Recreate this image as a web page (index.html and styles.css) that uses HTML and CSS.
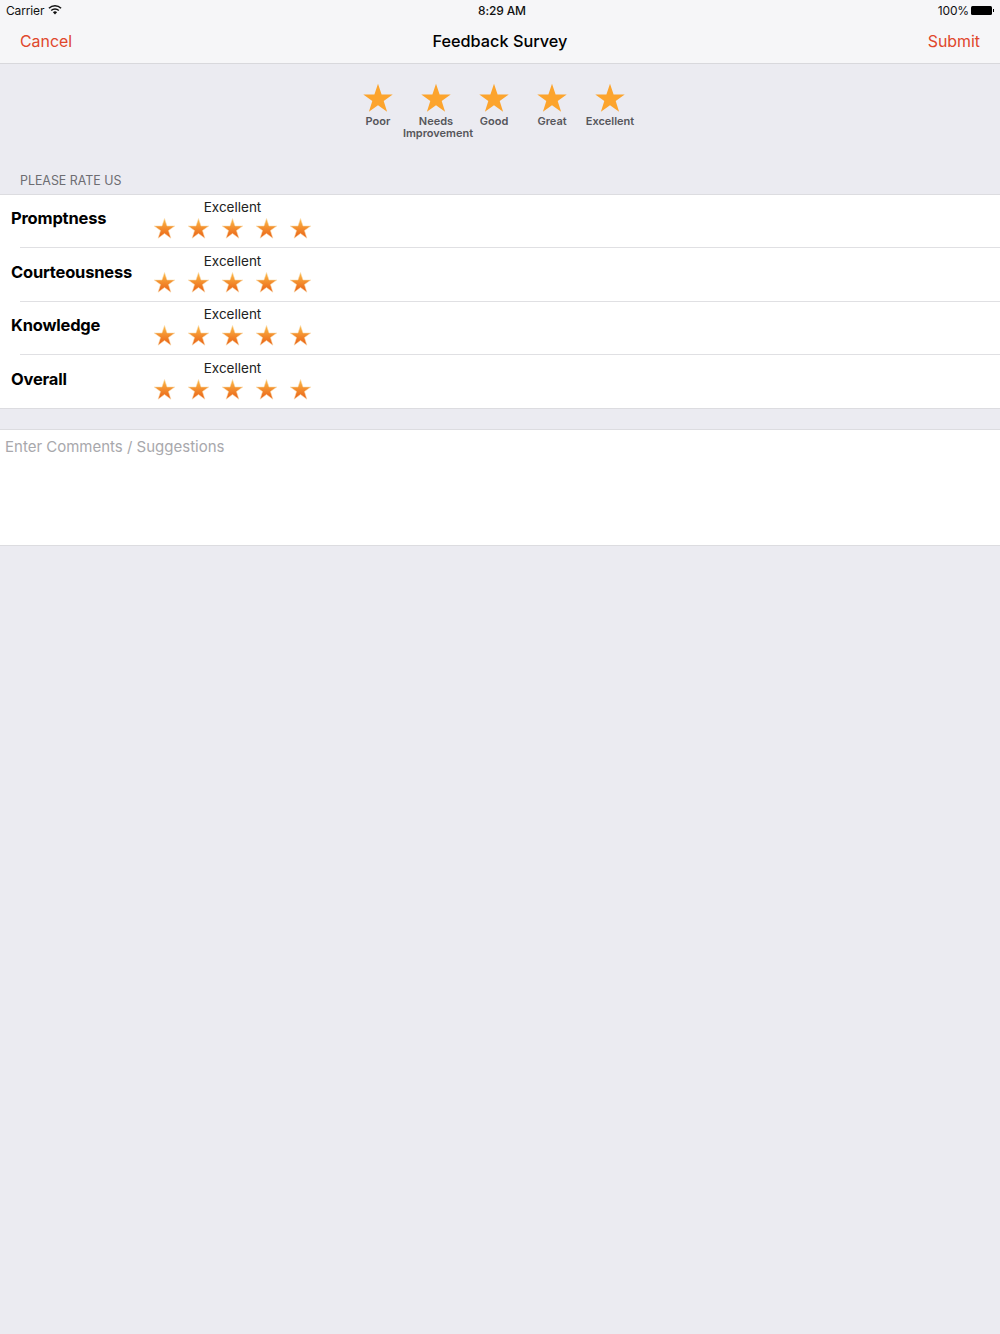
FILE: index.html
```html
<!DOCTYPE html>
<html lang="en">
<head>
	<meta charset="UTF-8">
	<title>Feedback Survey</title>
	<link rel="stylesheet" href="styles.css">
</head>
<body>
	<svg class="defs" width="0" height="0">
		<defs>
			<linearGradient id="rowstar" x1="0" y1="0" x2="0" y2="1">
				<stop offset="0" stop-color="#fdbb48"/>
				<stop offset="1" stop-color="#e95f14"/>
			</linearGradient>
			<symbol id="star" viewBox="0 0 30 30">
				<path d="M15 .8l3.6 10.6h11.1l-9 6.6 3.4 10.8-9.1-6.6-9.1 6.6 3.4-10.8-9-6.6h11.1z"/>
			</symbol>
		</defs>
	</svg>

	<header class="top">
		<div class="status">
			<div class="status-left">
				<span>Carrier</span>
				<svg class="wifi" viewBox="0 0 14 10" width="14" height="10">
					<path d="M7 9.6L4.9 7.3a3 3 0 0 1 4.2 0z"/>
					<path d="M3.7 6.1l-1-1.1a6.2 6.2 0 0 1 8.6 0l-1 1.1a4.7 4.7 0 0 0-6.6 0z"/>
					<path d="M1.5 3.8L.4 2.7a9.5 9.5 0 0 1 13.2 0l-1.1 1.1a8 8 0 0 0-11 0z"/>
				</svg>
			</div>
			<div class="status-time">8:29 AM</div>
			<div class="status-right">
				<span>100%</span>
				<span class="battery"></span>
			</div>
		</div>
		<nav class="nav">
			<a href="#" class="nav-btn">Cancel</a>
			<h1 class="nav-title">Feedback Survey</h1>
			<a href="#" class="nav-btn">Submit</a>
		</nav>
	</header>

	<section class="legend">
		<div class="legend-item">
			<svg class="legend-star"><use href="#star"/></svg>
			<span>Poor</span>
		</div>
		<div class="legend-item">
			<svg class="legend-star"><use href="#star"/></svg>
			<span>Needs</span>
			<span class="shift">Improvement</span>
		</div>
		<div class="legend-item">
			<svg class="legend-star"><use href="#star"/></svg>
			<span>Good</span>
		</div>
		<div class="legend-item">
			<svg class="legend-star"><use href="#star"/></svg>
			<span>Great</span>
		</div>
		<div class="legend-item">
			<svg class="legend-star"><use href="#star"/></svg>
			<span>Excellent</span>
		</div>
	</section>

	<div class="section-title">PLEASE RATE US</div>

	<section class="rates">
		<div class="rate">
			<div class="rate-name">Promptness</div>
			<div class="rate-box">
				<div class="rate-value">Excellent</div>
				<div class="stars">
					<svg class="row-star"><use href="#star"/></svg>
					<svg class="row-star"><use href="#star"/></svg>
					<svg class="row-star"><use href="#star"/></svg>
					<svg class="row-star"><use href="#star"/></svg>
					<svg class="row-star"><use href="#star"/></svg>
				</div>
			</div>
		</div>
		<div class="rate">
			<div class="rate-name">Courteousness</div>
			<div class="rate-box">
				<div class="rate-value">Excellent</div>
				<div class="stars">
					<svg class="row-star"><use href="#star"/></svg>
					<svg class="row-star"><use href="#star"/></svg>
					<svg class="row-star"><use href="#star"/></svg>
					<svg class="row-star"><use href="#star"/></svg>
					<svg class="row-star"><use href="#star"/></svg>
				</div>
			</div>
		</div>
		<div class="rate">
			<div class="rate-name">Knowledge</div>
			<div class="rate-box">
				<div class="rate-value">Excellent</div>
				<div class="stars">
					<svg class="row-star"><use href="#star"/></svg>
					<svg class="row-star"><use href="#star"/></svg>
					<svg class="row-star"><use href="#star"/></svg>
					<svg class="row-star"><use href="#star"/></svg>
					<svg class="row-star"><use href="#star"/></svg>
				</div>
			</div>
		</div>
		<div class="rate">
			<div class="rate-name">Overall</div>
			<div class="rate-box">
				<div class="rate-value">Excellent</div>
				<div class="stars">
					<svg class="row-star"><use href="#star"/></svg>
					<svg class="row-star"><use href="#star"/></svg>
					<svg class="row-star"><use href="#star"/></svg>
					<svg class="row-star"><use href="#star"/></svg>
					<svg class="row-star"><use href="#star"/></svg>
				</div>
			</div>
		</div>
	</section>

	<section class="comments">Enter Comments / Suggestions</section>
</body>
</html>
```

FILE: styles.css
```css
* {
	padding: 0;
	margin: 0;
	box-sizing: border-box;
}
html, body {
	height: 100%;
}
body {
	background: #ebebf1;
	font-family: Inter, "Liberation Sans", sans-serif;
	color: #000;
}
a {
	text-decoration: none;
}
.defs {
	position: absolute;
}
.top {
	height: 64px;
	background: #f6f6f8;
	border-bottom: 1px solid #d8d8dc;
}
.status {
	display: grid;
	grid-template-columns: 1fr auto 1fr;
	align-items: center;
	height: 20px;
	padding: 0 6px;
	font-size: 12px;
	letter-spacing: -0.15px;
	color: #111;
}
.status-left {
	display: flex;
	align-items: center;
	gap: 4px;
}
.status-time {
	padding-left: 4px;
	font-weight: 500;
}
.status-right {
	display: flex;
	align-items: center;
	justify-content: flex-end;
	gap: 2px;
	padding-right: 2px;
}
.wifi {
	fill: #111;
}
.battery {
	position: relative;
	width: 21px;
	height: 9px;
	background: #000;
	border-radius: 1.5px;
}
.battery::after {
	content: "";
	position: absolute;
	left: 21.5px;
	top: 3px;
	width: 1.5px;
	height: 3px;
	background: #000;
}
.nav {
	display: flex;
	align-items: center;
	justify-content: space-between;
	height: 42px;
	padding: 0 20px;
}
.nav-btn {
	font-size: 15.9px;
	color: #e0472c;
}
.nav-title {
	font-size: 16.3px;
	font-weight: 500;
}
.legend {
	display: flex;
	justify-content: center;
	height: 98px;
	padding: 19px 12px 0 0;
}
.legend-item {
	width: 58px;
	display: flex;
	flex-direction: column;
	align-items: center;
	text-align: center;
	font-size: 11px;
	line-height: 11.5px;
	font-weight: 600;
	color: #56565b;
	white-space: nowrap;
}
.legend-item .shift {
	margin-left: 4px;
}
.legend-star {
	width: 30px;
	height: 30px;
	margin-bottom: 3px;
	fill: #fca42d;
}
.section-title {
	height: 32px;
	padding: 11px 0 0 20px;
	font-size: 12.4px;
	line-height: 16px;
	color: #6d6d72;
}
.rates {
	background: #fff;
	border-top: 1px solid #dcdce0;
	border-bottom: 1px solid #dcdce0;
	height: 215px;
}
.rate {
	display: flex;
	height: 53.6px;
	padding-left: 11px;
	position: relative;
}
.rate + .rate::before {
	content: "";
	position: absolute;
	left: 20px;
	right: 0;
	top: -1.6px;
	height: 1px;
	background: #e0e0e3;
}
.rate-name {
	width: 143px;
	padding-top: 13px;
	font-size: 16.5px;
	line-height: 20px;
	font-weight: 700;
	letter-spacing: -0.2px;
}
.rate-box {
	width: 160px;
	padding-top: 4px;
}
.rate-value {
	width: 157px;
	text-align: center;
	font-size: 13.5px;
	line-height: 16px;
	color: #222;
}
.stars {
	display: flex;
	gap: 13px;
	margin-top: 3px;
}
.row-star {
	width: 21px;
	height: 21px;
	fill: url(#rowstar);
	stroke: #f9dcae;
	stroke-width: 0.8;
	overflow: visible;
}
.comments {
	margin-top: 20px;
	height: 117px;
	padding: 7px 5px;
	background: #fff;
	border-top: 1px solid #dcdce0;
	border-bottom: 1px solid #dcdce0;
	font-size: 15px;
	line-height: 20px;
	color: #a8a8ac;
}
```
